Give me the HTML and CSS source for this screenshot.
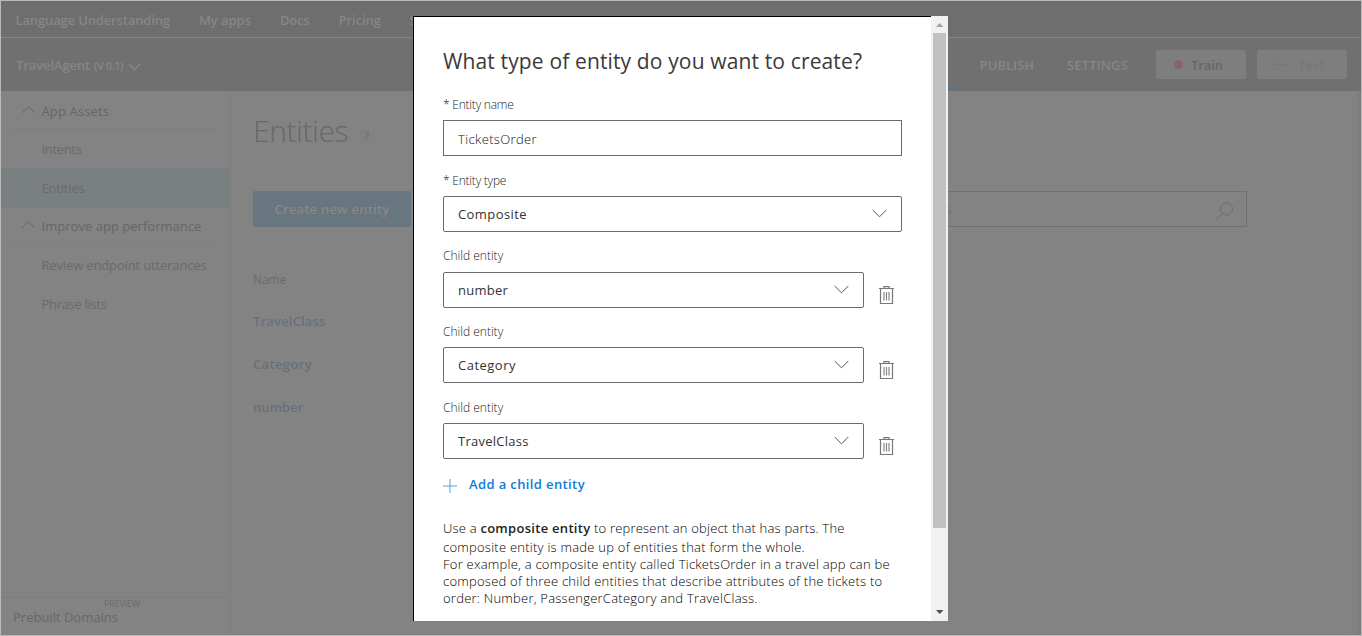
FILE: index.html
```html
<!DOCTYPE html>
<html lang="en">
<head>
<meta charset="utf-8">
<title>Language Understanding - Entities</title>
<link rel="stylesheet" href="styles.css">
</head>
<body>
<div class="page">
  <header class="topbar">
    <span class="brand">Language Understanding</span>
    <a class="w-apps">My apps</a>
    <a class="w-docs">Docs</a>
    <a class="w-pricing">Pricing</a>
    <a>Support</a>
  </header>
  <div class="appbar">
    <div class="app-name"><span>TravelAgent</span><small>(V 0.1)</small>
      <svg width="13" height="8" viewBox="0 0 13 8"><path d="M1 1l5.500 5.500L12 1"/></svg>
    </div>
    <nav class="app-nav">
      <a class="build">BUILD</a>
      <a>PUBLISH</a>
      <a class="settings">SETTINGS</a>
    </nav>
    <button class="bar-btn train"><i class="dot"></i>Train</button>
    <button class="bar-btn test"><svg width="14" height="13" viewBox="0 0 14 13"><path d="M14 6.500H1M7 .5l-6 6 6 6"/></svg>Test</button>
  </div>
  <div class="body">
    <aside class="sidebar">
      <div class="group-head"><svg width="15" height="9" viewBox="0 0 15 9"><path d="M1 8l6.500-6.500L14 8"/></svg><span>App Assets</span></div>
      <a class="item i-intents">Intents</a>
      <a class="item active">Entities</a>
      <div class="group-head second"><svg width="15" height="9" viewBox="0 0 15 9"><path d="M1 8l6.500-6.500L14 8"/></svg><span>Improve app performance</span></div>
      <a class="item i-review">Review endpoint utterances</a>
      <a class="item i-phrase">Phrase lists</a>
      <div class="side-foot"><span class="preview">PREVIEW</span><span class="prebuilt">Prebuilt Domains</span></div>
    </aside>
    <main class="content">
      <div class="heading"><h1>Entities</h1><span class="help">?</span></div>
      <div class="tools">
        <button class="create">Create new entity</button>
        <div class="search"><span>Search entities</span>
          <svg width="20" height="20" viewBox="0 0 20 20"><circle cx="12.500" cy="7" r="6"/><path d="M8.300 11.300L1 18.500"/></svg>
        </div>
      </div>
      <div class="table">
        <div class="th">Name</div>
        <a class="tr">TravelClass</a>
        <a class="tr cat">Category</a>
        <a class="tr num">number</a>
      </div>
    </main>
  </div>

  <section class="modal">
    <div class="modal-body">
      <h2>What type of entity do you want to create?</h2>
      <div class="field"><label class="req">* Entity name</label><div class="box name"><span>TicketsOrder</span></div></div>
      <div class="field"><label class="req">* Entity type</label><div class="box select"><span class="v-comp">Composite</span><svg width="15" height="9" viewBox="0 0 15 9"><path d="M.7 1l6.800 6.800L14.300 1"/></svg></div></div>
      <div class="field tight"><label>Child entity</label>
        <div class="row"><div class="box select"><span>number</span><svg width="15" height="9" viewBox="0 0 15 9"><path d="M.7 1l6.800 6.800L14.300 1"/></svg></div>
        <svg class="trash" width="15" height="19" viewBox="0 0 15 19"><path d="M0 2.500h15M5 2.500V.6h5v1.900M1.500 3v14.500h12V3"/><path class="bars" d="M5 6v8.500M7.500 6v8.500M10 6v8.500"/></svg></div></div>
      <div class="field"><label>Child entity</label>
        <div class="row"><div class="box select"><span class="v-cat">Category</span><svg width="15" height="9" viewBox="0 0 15 9"><path d="M.7 1l6.800 6.800L14.300 1"/></svg></div>
        <svg class="trash" width="15" height="19" viewBox="0 0 15 19"><path d="M0 2.500h15M5 2.500V.6h5v1.900M1.500 3v14.500h12V3"/><path class="bars" d="M5 6v8.500M7.500 6v8.500M10 6v8.500"/></svg></div></div>
      <div class="field"><label>Child entity</label>
        <div class="row"><div class="box select"><span>TravelClass</span><svg width="15" height="9" viewBox="0 0 15 9"><path d="M.7 1l6.800 6.800L14.300 1"/></svg></div>
        <svg class="trash" width="15" height="19" viewBox="0 0 15 19"><path d="M0 2.500h15M5 2.500V.6h5v1.900M1.500 3v14.500h12V3"/><path class="bars" d="M5 6v8.500M7.500 6v8.500M10 6v8.500"/></svg></div></div>
      <a class="add"><svg width="14" height="14" viewBox="0 0 14 14"><path d="M0 7h14M7 0v14"/></svg><span>Add a child entity</span></a>
      <p class="lead">Use a <strong>composite entity</strong> to represent an object that has parts. The</p>
      <p>composite entity is made up of entities that form the whole.<br>For example, a composite entity called TicketsOrder in a travel app can be<br>composed of three child entities that describe attributes of the tickets to<br>order: Number, PassengerCategory and TravelClass.</p>
    </div>
    <div class="scrollbar">
      <svg class="arrow up" width="17" height="17" viewBox="0 0 17 17"><path d="M5 11h7.500L8.700 7z"/></svg>
      <div class="thumb"></div>
      <svg class="arrow down" width="17" height="17" viewBox="0 0 17 17"><path d="M5 6h7.500L8.700 10z"/></svg>
    </div>
  </section>
</div>
</body>
</html>
```
FILE: styles.css
```css
* { box-sizing: border-box; }
body {
  margin: 0;
  font: 400 13px/20px "Open Sans", "Noto Sans", sans-serif;
  color: #6b6b6b;
}
svg { fill: none; stroke: currentColor; flex: none; display: block; }
button { font: inherit; border: 0; padding: 0; }
h1, h2, p { margin: 0; }

.page {
  position: relative;
  width: 1362px;
  height: 636px;
  border: 1px solid #b9b9b9;
  background: #838383;
  display: flex;
  flex-direction: column;
  overflow: hidden;
  white-space: nowrap;
}

.topbar {
  height: 37px;
  flex: none;
  background: #6e6e6e;
  border-bottom: 1px solid #858585;
  padding: 1px 0 0 14.500px;
  display: flex;
  align-items: center;
  gap: 29px;
  color: #868686;
  font-weight: 600;
}
.brand { letter-spacing: -.14px; }
.w-apps { letter-spacing: -.05px; }
.w-docs { letter-spacing: -.12px; }
.w-pricing { letter-spacing: -.11px; }

.appbar {
  height: 53px;
  flex: none;
  background: #707070;
  display: flex;
  align-items: center;
  padding: 0 14px;
  color: #868686;
  font-weight: 600;
}
.app-name { display: flex; align-items: center; flex: 1; letter-spacing: -.11px; padding: 1px 0 0 1px; }
.app-name small { font-size: 11px; letter-spacing: -.47px; margin: 1px 5px 0 4px; }
.app-name svg { stroke-width: 1.500; margin-top: 3px; }
.app-nav { display: flex; gap: 33px; align-self: stretch; line-height: 54px; margin-right: 28px; }
.app-nav .build { border-bottom: 4px solid #67727e; height: 52px; padding: 0 17px; margin-right: -17px; }
.settings { letter-spacing: .15px; }
.bar-btn {
  width: 90px;
  height: 29px;
  border-radius: 2px;
  background: #7e7e7e;
  color: #666;
  display: flex;
  align-items: center;
}
.train { letter-spacing: -.1px; margin-right: 11px; padding-left: 18px; }
.dot { width: 9px; height: 9px; border-radius: 50%; background: #85656a; margin-right: 8px; }
.test { color: #777; padding-left: 15px; gap: 12px; }

.body { flex: 1; display: flex; min-height: 0; }
.sidebar { width: 230px; border-right: 1px solid #7e7e7e; display: flex; flex-direction: column; }
.group-head {
  height: 38px;
  margin: 0 8px;
  border-bottom: 1px solid #7f7f7f;
  padding: 3px 0 0 12px;
  display: flex;
  align-items: center;
  gap: 5.500px;
  font-weight: 500;
  letter-spacing: .13px;
  color: #666;
}
.group-head.second { letter-spacing: .03px; padding-top: 0; height: 37px; }
.group-head svg { margin-top: -3px; }
.item { height: 39px; line-height: 40px; padding-left: 40.500px; color: #6a6a6a; }
.i-intents { letter-spacing: -.33px; }
.i-review { letter-spacing: -.15px; }
.i-phrase { letter-spacing: -.32px; }
.item.active { background: #7a7f82; letter-spacing: -.19px; height: 40px; }
.side-foot {
  margin-top: auto;
  height: 38px;
  border-top: 1px solid #7d7d7d;
  padding-left: 12px;
  display: flex;
  flex-direction: column;
  font-weight: 500;
  color: #676767;
}
.preview { font-size: 9px; font-weight: 400; line-height: 10px; margin: 1px 0 0 91px; letter-spacing: -.17px; color: #6c6c6c; }
.prebuilt { line-height: 17px; }

.content { flex: 1; padding: 17px 114px 0 22px; box-shadow: inset -8px 0 6px -6px #7a7a7a; }
.heading { display: flex; align-items: center; height: 46px; }
h1 { font-size: 30px; font-weight: 300; letter-spacing: -.42px; line-height: 46px; color: #686868; }
.help {
  width: 16px;
  height: 16px;
  border-radius: 50%;
  background: #818181;
  font-size: 10px;
  line-height: 16px;
  text-align: center;
  margin: 10px 0 0 11px;
}
.tools { display: flex; justify-content: space-between; margin-top: 37px; }
.create {
  width: 158px;
  height: 36px;
  border-radius: 2px;
  background: #687680;
  color: #878787;
  font-weight: 600;
  letter-spacing: .22px;
}
.search {
  width: 400px;
  height: 36px;
  border: 1px solid #717171;
  padding: 0 12px 0 15px;
  display: flex;
  align-items: center;
  justify-content: space-between;
  color: #757575;
}
.search svg { color: #6d6d6d; margin-top: 5px; }
.table { margin-top: 35px; }
.th { font-size: 12px; font-weight: 500; letter-spacing: -.05px; height: 38px; line-height: 36px; border-bottom: 1px solid #808080; }
.tr { display: block; height: 43px; line-height: 42px; border-bottom: 1px solid #808080; font-weight: 600; letter-spacing: .18px; color: #67717c; }
.tr.cat { letter-spacing: .36px; }
.tr.num { letter-spacing: .06px; }

/* Dialog floats above the dimmed page */
.modal {
  position: absolute;
  left: 412px;
  top: 15px;
  width: 535px;
  height: 605px;
  background: #fff;
  display: flex;
  color: #222;
}
.modal-body { flex: 1; border: solid #000; border-width: 1px 0 0 1px; padding: 27px 29px 0; overflow: hidden; }
h2 { font-size: 21px; font-weight: 400; line-height: 34px; letter-spacing: .14px; color: #3a3a3a; margin-bottom: 17px; }
.field { margin-bottom: 15px; }
.field.tight { margin-bottom: 14px; }
label { display: block; height: 25px; line-height: 19px; font-size: 12px; font-weight: 300; }
.tight label { line-height: 18px; }
.req { letter-spacing: -.22px; }
.box {
  height: 36px;
  border: 1px solid #6b6b6b;
  padding: 0 14px;
  display: flex;
  align-items: center;
  justify-content: space-between;
  flex: 1;
  letter-spacing: .26px;
  color: #333;
}
.box.select { border-radius: 2px; }
.box.name { font-weight: 300; letter-spacing: .36px; padding-top: 2px; color: #111; }
.v-comp { letter-spacing: .42px; }
.v-cat { letter-spacing: .49px; }
.box svg { color: #555; margin-top: -2px; }
.row { display: flex; margin-right: 8px; gap: 15px; }
.trash { color: #777; margin-top: 14px; stroke-width: 1.200; }
.trash .bars { color: #888; stroke-width: 1.200; }
.add { display: flex; align-items: center; gap: 12px; height: 20px; color: #0f7bd7; font-weight: 600; letter-spacing: .38px; }
.add svg { color: #4f9fe3; margin-top: 3px; }
p { font-weight: 300; line-height: 17px; letter-spacing: .24px; color: #000; }
.lead { line-height: 19px; margin: 25px 0 1px; letter-spacing: .2px; }
strong { font-weight: 600; letter-spacing: .29px; color: #222; }

.scrollbar { width: 17px; background: #f1f1f1; display: flex; flex-direction: column; }
.thumb { width: 13px; height: 495px; margin: 0 2px; background: #c1c1c1; }
.arrow { stroke: none; }
.arrow.up { fill: #a3a3a3; }
.arrow.down { fill: #505050; margin-top: auto; }
```
